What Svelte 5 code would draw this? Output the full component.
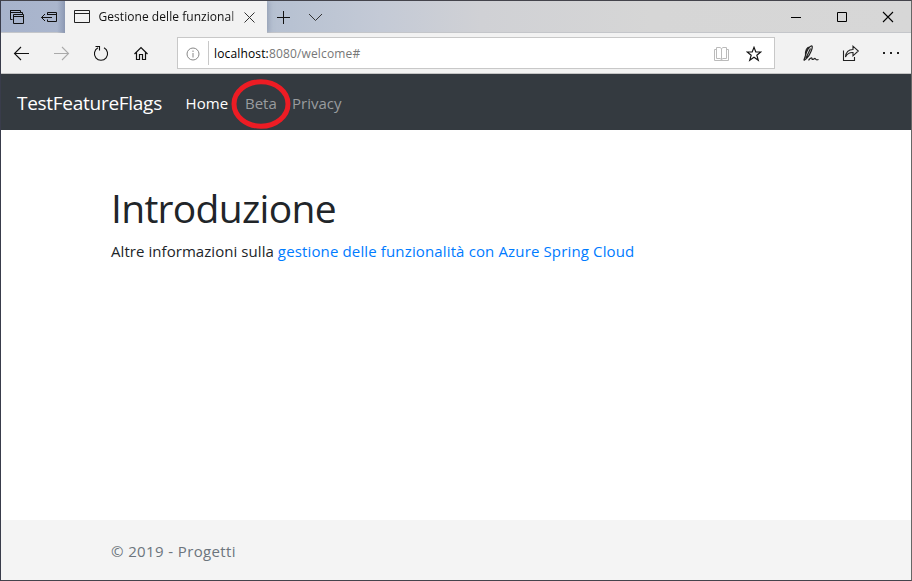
<script>
  const links = [
    { name: 'Home', active: true, circled: false },
    { name: 'Beta', active: false, circled: true },
    { name: 'Privacy', active: false, circled: false }
  ];
</script>

<div class="window">
  <header class="tabs">
    <div class="tab-tools">
      <svg width="64" height="32" viewBox="0 0 64 32" fill="none" stroke="#111">
        <path d="M9.500 9.500H19.500V11.500M9.500 9V18.500H11.500M9.500 11.500H21.500V13.500M12.500 13.500H22.500V22.500H12.500ZM12.500 15.500H22.500" />
        <path d="M46.500 14V11.500H55.500V20.500H46.500V18.500M46.500 13.500H55.500M40.500 16.500H51M44 13L40.500 16.500L44 20" />
      </svg>
    </div>
    <div class="tab">
      <svg class="page" width="16" height="14" viewBox="0 0 16 14" fill="none" stroke="#222"><path d="M.5 .5H15.500V12.500H.5ZM.5 3.500H15.500" /></svg>
      <span class="tab-title">Gestione delle funzional</span>
      <svg class="close" width="11" height="11" viewBox="0 0 11 11" stroke="#333"><path d="M.5 .5L10.500 10.500M10.500 .5L.5 10.500" /></svg>
    </div>
    <svg class="new-tab" width="60" height="32" viewBox="0 0 60 32" fill="none" stroke="#111">
      <path d="M10 16.500H23M16.500 10V23" />
      <path d="M42 13L48.500 19.500L55 13" stroke="#333" />
    </svg>
    <svg class="controls" width="138" height="32" viewBox="0 0 138 32" fill="none" stroke="#000">
      <path d="M18 16.500H28M64.500 11.500H73.500V20.500H64.500Z" />
      <path d="M110 11L120 21M120 11L110 21" stroke-width="1.1" />
    </svg>
  </header>

  <div class="toolbar">
    <svg class="history" width="176" height="40" viewBox="0 0 176 40" fill="none" stroke="#111" stroke-width="1.1">
      <path d="M13.500 20.500H28M20 14L13.500 20.500L20 27" />
      <path d="M53 20.500H67.500M61 14L67.500 20.500L61 27" stroke="#aaa" />
      <path d="M97 14.800A6.600 6.600 0 1 0 103 14.800M94.500 13.500H98.500V17.500" />
      <path d="M133.500 21L140 14.500L146.500 21M135.500 19.500V26.500H138.500V21.500H141.500V26.500H144.500V19.500" stroke-width="1.2" />
    </svg>
    <div class="address">
      <svg class="info" width="14" height="14" viewBox="0 0 14 14" fill="none" stroke="#888"><circle cx="7" cy="7" r="6" /><path d="M7 6V10.500M7 3.500V5" /></svg>
      <span class="rule"></span>
      <span class="url"><b>localhost:</b>8080/welcome#</span>
      <svg class="book" width="16" height="14" viewBox="0 0 16 14" fill="none" stroke="#bbb"><path d="M2.500 .5H6L7.500 1.500L9 .5H12.500V11.500H9L7.500 12.500L6 11.500H2.500ZM7.500 1.500V12.500M2.500 2.500H.5V13.500H14.500V2.500H12.500" /></svg>
      <svg class="star" width="16" height="16" viewBox="0 0 16 16" fill="none" stroke="#111" stroke-width="1.15"><path d="M8 1.300L9.800 6H14.800L10.800 9.200L12.300 14.300L8 11.300L3.700 14.300L5.200 9.200L1.200 6H6.200Z" /></svg>
    </div>
    <svg class="actions" width="136" height="40" viewBox="0 0 136 40" fill="none" stroke="#222" stroke-width="1.1">
      <path d="M28.800 27.500L30.500 22.500C31.500 17.500 34.500 13 36.500 12.800C38 13 37 16 36 18.500C35 21 33.500 24 31.500 25.500L28.800 27.500M30.500 22.500C30 17 32 14 35 14M35.500 15.500L31 25M33.500 27.300C35.500 24.500 37 24.500 37 25.500C37 27.500 38.500 26 39.500 25.500C41 25 40 28 43.500 26.500" stroke-width="1.2" />
      <path d="M68.500 17.500V27.500H79.500V24M70.500 24C71 18.500 74 16.500 78 16.500V13.200L83.300 18L78 22.800V19.500C74.500 19.300 72 21 70.500 24Z" stroke-width="1.1" />
      <path d="M108 20H110M115 20H117M122 20H124" stroke-width="2" />
    </svg>
  </div>

  <nav>
    <span class="brand">TestFeatureFlags</span>
    {#each links as link}
      <span class="link {link.name.toLowerCase()}" class:active={link.active}>
        {link.name}
        {#if link.circled}
          <svg class="ring" width="60" height="50" viewBox="0 0 60 50"><ellipse cx="30" cy="25" rx="27" ry="22.200" fill="none" stroke="#ed1c24" stroke-width="5" /></svg>
        {/if}
      </span>
    {/each}
  </nav>

  <main>
    <h1>Introduzione</h1>
    <p>Altre informazioni sulla <a href="#azure">gestione delle funzionalità con Azure Spring Cloud</a></p>
  </main>

  <footer><span>© 2019 - Progetti</span></footer>
</div>

<style>
  :global(body) { margin: 0; }
  .window {
    box-sizing: border-box;
    width: 912px;
    height: 581px;
    display: flex;
    flex-direction: column;
    border: 1px solid #44444c;
    border-left-color: #393c4b;
    border-right-color: #666;
    overflow: hidden;
    background: #fff;
    font-family: "Open Sans", "Noto Sans", sans-serif;
    white-space: nowrap;
  }
  svg { display: block; flex: none; }
  .tabs {
    display: flex;
    flex: none;
    height: 32px;
    background: linear-gradient(90deg, #a7b3cc 0, #b8c2d2 290px, #c4cad6 380px, #d0d1d5 480px, #d6d6d6 650px, #d7d7d7 100%);
    box-shadow: inset 0 -1px #c4c6ca;
  }
  .tab-tools { width: 64px; background: linear-gradient(90deg, transparent 56px, #8e9ab4); }
  .tab {
    box-sizing: border-box;
    display: flex;
    align-items: center;
    width: 202px;
    padding-left: 9px;
    background: #f2f2f2;
    box-shadow: 2px 0 5px #77849b88;
  }
  .tab-title {
    width: 137px;
    margin-left: 8.5px;
    font-size: 12px;
    line-height: 20px;
    letter-spacing: 0.05px;
    color: #111;
    mask-image: linear-gradient(90deg, #000 132px, #0006 136px);
  }
  .close { margin-left: 8.5px; }
  .controls { margin-left: auto; }
  .toolbar {
    box-sizing: border-box;
    display: flex;
    flex: none;
    height: 41px;
    background: #f2f2f2;
    border-bottom: 1px solid #c4c4c4;
  }
  .address {
    box-sizing: border-box;
    display: flex;
    align-items: center;
    width: 598px;
    height: 32px;
    margin-top: 4px;
    padding: 0 12px 0 8px;
    border: 1px solid #c8c8c8;
    background: #fff;
  }
  .info { margin-top: 2px; }
  .rule { width: 1px; height: 24px; margin: 0 5px 0 8px; background: #c8c8c8; }
  .url { margin-top: 1px; font-size: 12px; line-height: 20px; color: #777; letter-spacing: 0.15px; }
  .url b { font-weight: 400; color: #000; }
  .book { margin: 2px 0 0 auto; }
  .star { margin: 2px 0 0 16px; }
  nav {
    box-sizing: border-box;
    display: flex;
    align-items: center;
    flex: none;
    height: 56px;
    padding: 2px 0 0 16px;
    background: #343a40;
    color: #999c9f;
  }
  .brand { width: 168.500px; font-size: 19px; letter-spacing: -0.28px; color: #fff; }
  .link { position: relative; font-size: 15px; }
  .active { color: #fff; }
  .home { width: 59.500px; letter-spacing: 0.1px; }
  .beta { width: 47px; }
  .ring { position: absolute; left: -14px; top: -14px; }
  main { flex: 1; padding: 54px 0 0 110px; color: #212529; }
  h1 { margin: 0; font-size: 39px; line-height: 48px; font-weight: 400; letter-spacing: -0.7px; }
  p { margin: 7px 0 0; font-size: 15px; line-height: 24px; letter-spacing: 0.06px; }
  a { color: #007bff; text-decoration: none; letter-spacing: 0.14px; }
  footer {
    box-sizing: border-box;
    display: flex;
    align-items: center;
    flex: none;
    height: 60px;
    padding: 2px 0 0 110px;
    background: #f4f4f4;
    color: #6c757d;
    font-size: 15px;
    letter-spacing: 0.38px;
  }
</style>
